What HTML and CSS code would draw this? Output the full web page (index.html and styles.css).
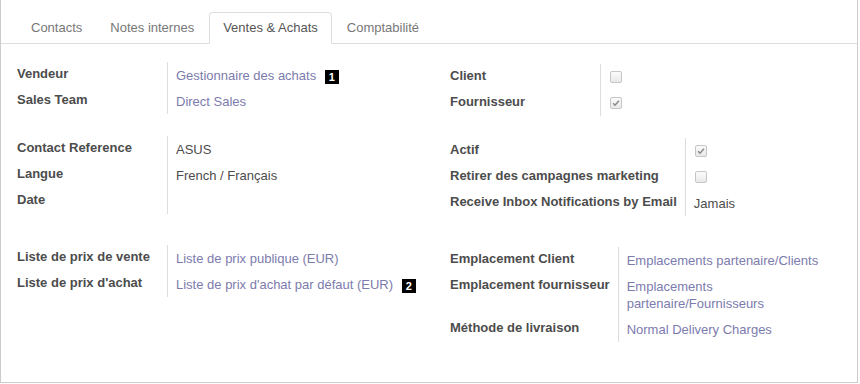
FILE: index.html
```html
<!DOCTYPE html>
<html lang="fr">
<head>
    <meta charset="UTF-8">
    <meta name="viewport" content="width=device-width, initial-scale=1.0">
    <title>Ventes &amp; Achats</title>
    <link rel="stylesheet" href="styles.css">
</head>
<body>
    <div class="sheet">
        <ul class="tabs">
            <li class="tab">Contacts</li>
            <li class="tab">Notes internes</li>
            <li class="tab active">Ventes &amp; Achats</li>
            <li class="tab">Comptabilité</li>
        </ul>

        <div class="section first">
            <div class="group">
                <div class="label">Vendeur</div>
                <div class="value link">Gestionnaire des achats <span class="badge">1</span></div>
                <div class="label">Sales Team</div>
                <div class="value link">Direct Sales</div>
            </div>
            <div class="group">
                <div class="label">Client</div>
                <div class="value"><span class="check"></span></div>
                <div class="label">Fournisseur</div>
                <div class="value"><span class="check checked"><svg viewBox="0 0 12 12"><path d="M2.5 6.2 L4.8 8.6 L9.6 3.2"/></svg></span></div>
            </div>
        </div>

        <div class="section second">
            <div class="group">
                <div class="label">Contact Reference</div>
                <div class="value">ASUS</div>
                <div class="label">Langue</div>
                <div class="value">French / Français</div>
                <div class="label">Date</div>
                <div class="value"></div>
            </div>
            <div class="group">
                <div class="label">Actif</div>
                <div class="value"><span class="check checked"><svg viewBox="0 0 12 12"><path d="M2.5 6.2 L4.8 8.6 L9.6 3.2"/></svg></span></div>
                <div class="label">Retirer des campagnes marketing</div>
                <div class="value"><span class="check"></span></div>
                <div class="label">Receive Inbox Notifications by Email</div>
                <div class="value">Jamais</div>
            </div>
        </div>

        <div class="section third">
            <div class="group">
                <div class="label">Liste de prix de vente</div>
                <div class="value link">Liste de prix publique (EUR)</div>
                <div class="label">Liste de prix d'achat</div>
                <div class="value link">Liste de prix d'achat par défaut (EUR) <span class="badge">2</span></div>
            </div>
            <div class="group">
                <div class="label">Emplacement Client</div>
                <div class="value link">Emplacements partenaire/Clients</div>
                <div class="label">Emplacement fournisseur</div>
                <div class="value link">Emplacements partenaire/Fournisseurs</div>
                <div class="label">Méthode de livraison</div>
                <div class="value link">Normal Delivery Charges</div>
            </div>
        </div>
    </div>
</body>
</html>
```
FILE: styles.css
```css
:root {
    --text-color: #4c4c4c;
    --link-color: #7c7bad;
    --line-color: #dddddd;
    --frame-color: #cccccc;
}

* {
    margin: 0;
    padding: 0;
    box-sizing: border-box;
    font-family: "Liberation Sans", Arial, sans-serif;
}

body {
    background: #fff;
    color: var(--text-color);
    font-size: 13px;
}

.sheet {
    width: 858px;
    height: 383px;
    border: 1px solid var(--frame-color);
    border-top: none;
    box-shadow: 0 1px 0 #e6e6e6;
}

/* onglets */
.tabs {
    list-style: none;
    display: flex;
    padding: 12px 0 0 16px;
    border-bottom: 1px solid var(--line-color);
}

.tab {
    margin-right: 2px;
    margin-bottom: -1px;
    padding: 6px 12px;
    line-height: 18px;
    border: 1px solid transparent;
    border-radius: 4px 4px 0 0;
    color: #777;
}

.tab:first-child {
    padding-left: 13px;
}

.tab.active {
    background: #fff;
    border-color: var(--line-color);
    border-bottom-color: #fff;
    padding: 6px 13px;
    color: #555;
}

/* groupes de champs */
.section {
    display: grid;
    grid-template-columns: 433px 1fr;
    padding: 0 16px;
}

.section.first { margin-top: 18px; }
.section.second { margin-top: 20px; }
.section.third { margin-top: 29px; }

.group {
    display: grid;
    grid-template-columns: minmax(150px, max-content) 1fr;
    align-content: start;
}

.group + .group {
    margin-top: 2px;
}

.label {
    padding: 3px 8px 6px 0;
    line-height: 17px;
    font-weight: bold;
    white-space: nowrap;
}

.value {
    padding: 5px 0 4px 8px;
    line-height: 17px;
    border-left: 1px solid var(--line-color);
}

.value.link {
    color: var(--link-color);
}

.badge {
    display: inline-block;
    width: 14px;
    height: 14px;
    margin-left: 5px;
    background: #000;
    color: #fff;
    font-size: 11px;
    font-weight: bold;
    line-height: 14px;
    text-align: center;
    vertical-align: -1px;
}

.check {
    display: inline-block;
    width: 12px;
    height: 12px;
    margin: 2px 0 0 1px;
    border: 1px solid #c6c6c6;
    border-radius: 2px;
    background: linear-gradient(#fbfbfb, #e9e9e9);
    vertical-align: top;
}

.check svg {
    display: block;
    width: 10px;
    height: 10px;
}

.check path {
    fill: none;
    stroke: #8a8a8a;
    stroke-width: 1.8;
}
```
